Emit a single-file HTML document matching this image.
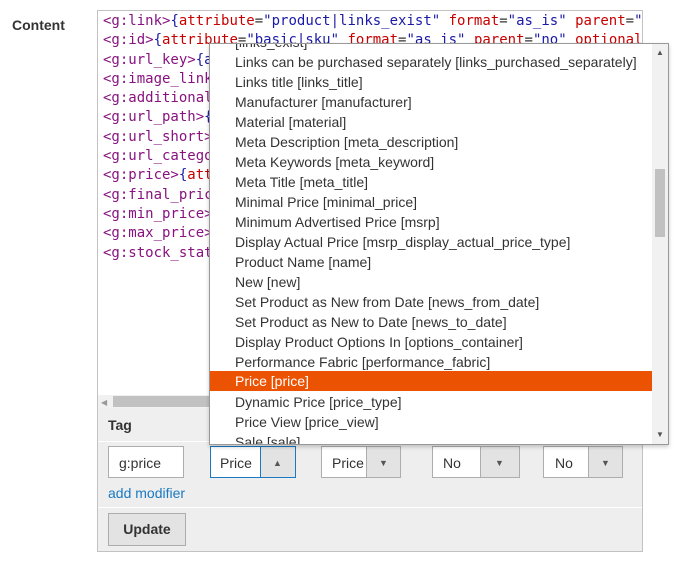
<html><head><style>
body{margin:0;width:687px;height:566px;background:#fff;font-family:"Liberation Sans",sans-serif;position:relative;overflow:hidden}
.a{position:absolute}
.lbl{left:12px;top:17px;font-size:14px;font-weight:bold;color:#333}
.box{left:97px;top:10px;width:544px;height:540px;border:1px solid #c2c2c2;background:#eee}
.ta{left:0;top:0;width:544px;height:384px;background:#fff;overflow:hidden}
pre{margin:0;position:absolute;left:5px;top:1px;font-family:"DejaVu Sans Mono",monospace;font-size:14px;line-height:19.3px;color:#333}
.t{color:#881280}.b{color:#1a1aa6}.r{color:#c80000}.s{color:#1a1aa6}
.hs{left:0;top:384px;width:544px;height:13px;background:#f1f1f1}
.dd{left:209px;top:43px;width:458px;height:400px;border:1px solid #999;background:#fff;overflow:hidden;box-shadow:0 2px 4px rgba(0,0,0,.2)}
.it{position:absolute;left:25px;font-size:14px;color:#333;white-space:nowrap;height:20px;line-height:20px}
.hl{position:absolute;left:0;width:442px;height:20px;background:#eb5202}
.inp{border:1px solid #adadad;background:#fff;height:32px;font-size:14px;color:#333;line-height:32px;box-sizing:border-box}
.btn{background:#e3e3e3;border-left:1px solid #adadad;position:absolute;right:0;top:0;bottom:0}
</style></head><body>
<div class="a lbl">Content</div>
<div class="a box">
 <div class="a ta"><pre><span class="t">&lt;g:link&gt;</span><span class="b">{</span><span class="r">attribute</span>=<span class="s">"product|links_exist"</span> <span class="r">format</span>=<span class="s">"as_is"</span> <span class="r">parent</span>=<span class="s">"</span>
<span class="t">&lt;g:id&gt;</span><span class="b">{</span><span class="r">attribute</span>=<span class="s">"basic|sku"</span> <span class="r">format</span>=<span class="s">"as_is"</span> <span class="r">parent</span>=<span class="s">"no"</span> <span class="r">optional</span>
<span class="t">&lt;g:url_key&gt;</span><span class="b">{a</span>
<span class="t">&lt;g:image_link</span>
<span class="t">&lt;g:additional</span>
<span class="t">&lt;g:url_path&gt;</span><span class="b">{</span>
<span class="t">&lt;g:url_short&gt;</span>
<span class="t">&lt;g:url_catego</span>
<span class="t">&lt;g:price&gt;</span><span class="b">{</span><span class="r">att</span>
<span class="t">&lt;g:final_pric</span>
<span class="t">&lt;g:min_price&gt;</span>
<span class="t">&lt;g:max_price&gt;</span>
<span class="t">&lt;g:stock_stat</span></pre></div>
 <div class="a hs"><div class="a" style="left:3px;top:3px;font-size:8px;color:#999">◀</div><div class="a" style="left:15px;top:1px;width:100px;height:11px;background:#c1c1c1"></div></div>
 <div class="a" style="left:0;top:397px;width:544px;height:32px;background:#efefef"></div>
 <div class="a" style="left:10px;top:406px;font-size:14px;font-weight:bold;color:#333">Tag</div>
 <div class="a" style="left:0;top:430px;width:544px;height:1px;background:#fff"></div>
 <div class="a inp" style="left:10px;top:435px;width:76px;padding-left:10px">g:price</div>
 <div class="a inp" style="left:112px;top:435px;width:86px;padding-left:9px;border-color:#1979c3">Price<div class="btn" style="width:34px;border-left-color:#1979c3"><span class="a" style="left:12px;top:0;font-size:9px;color:#555">▲</span></div></div>
 <div class="a inp" style="left:223px;top:435px;width:80px;padding-left:10px">Price<div class="btn" style="width:33px"><span class="a" style="left:12px;top:0;font-size:9px;color:#555">▼</span></div></div>
 <div class="a inp" style="left:334px;top:435px;width:88px;padding-left:10px">No<div class="btn" style="width:38px"><span class="a" style="left:14px;top:0;font-size:9px;color:#555">▼</span></div></div>
 <div class="a inp" style="left:445px;top:435px;width:80px;padding-left:11px">No<div class="btn" style="width:33px"><span class="a" style="left:12px;top:0;font-size:9px;color:#555">▼</span></div></div>
 <div class="a" style="left:10px;top:474px;font-size:14px;color:#1979c3">add modifier</div>
 <div class="a" style="left:0;top:496px;width:544px;height:1px;background:#fff"></div>
 <div class="a" style="left:10px;top:502px;width:78px;height:33px;border:1px solid #adadad;background:#e3e3e3;box-sizing:border-box;text-align:center;line-height:31px;font-size:14px;font-weight:bold;color:#333">Update</div>
</div>
<div class="a dd">
 <div class="it" style="top:-12px">[links_exist]</div>
 <div class="it" style="top:8px">Links can be purchased separately [links_purchased_separately]</div>
 <div class="it" style="top:28px">Links title [links_title]</div>
 <div class="it" style="top:48px">Manufacturer [manufacturer]</div>
 <div class="it" style="top:68px">Material [material]</div>
 <div class="it" style="top:88px">Meta Description [meta_description]</div>
 <div class="it" style="top:108px">Meta Keywords [meta_keyword]</div>
 <div class="it" style="top:128px">Meta Title [meta_title]</div>
 <div class="it" style="top:148px">Minimal Price [minimal_price]</div>
 <div class="it" style="top:168px">Minimum Advertised Price [msrp]</div>
 <div class="it" style="top:188px">Display Actual Price [msrp_display_actual_price_type]</div>
 <div class="it" style="top:208px">Product Name [name]</div>
 <div class="it" style="top:228px">New [new]</div>
 <div class="it" style="top:248px">Set Product as New from Date [news_from_date]</div>
 <div class="it" style="top:268px">Set Product as New to Date [news_to_date]</div>
 <div class="it" style="top:288px">Display Product Options In [options_container]</div>
 <div class="it" style="top:308px">Performance Fabric [performance_fabric]</div>
 <div class="hl" style="top:327px"></div>
 <div class="it" style="top:327px;color:#fff">Price [price]</div>
 <div class="it" style="top:348px">Dynamic Price [price_type]</div>
 <div class="it" style="top:368px">Price View [price_view]</div>
 <div class="it" style="top:388px">Sale [sale]</div>
 <div class="a" style="left:442px;top:0;width:16px;height:400px;background:#f1f1f1"></div>
 <div class="a" style="left:445px;top:125px;width:10px;height:68px;background:#c1c1c1"></div>
 <div class="a" style="left:446px;top:4px;font-size:8px;color:#555">▲</div>
 <div class="a" style="left:446px;top:386px;font-size:8px;color:#555">▼</div>
</div>
</body></html>
